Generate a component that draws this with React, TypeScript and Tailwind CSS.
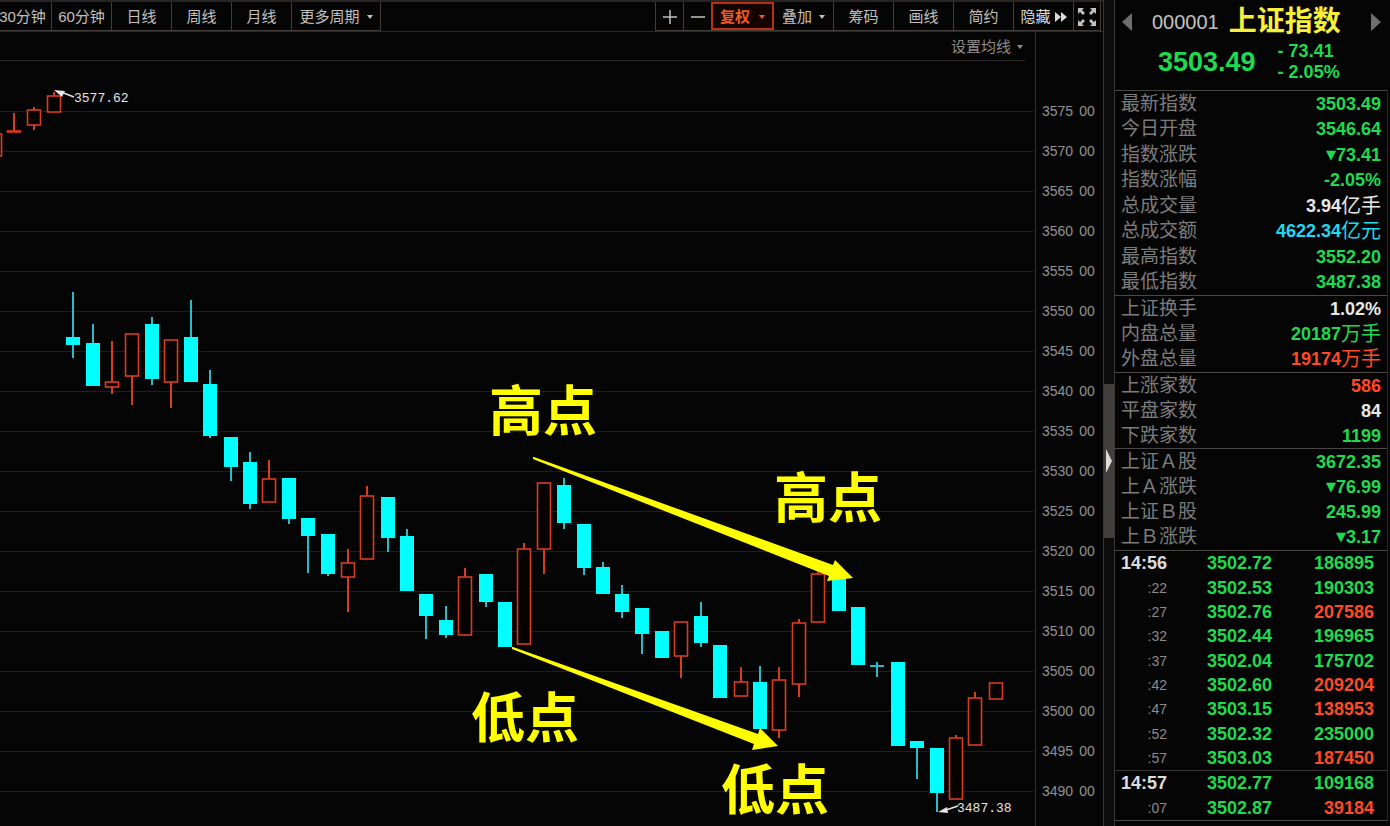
import { Fragment } from 'react';


type Candle = {
  x: number;
  top: number;
  bottom: number;
  high?: number;
  low?: number;
  up?: boolean;
};

const candles: Candle[] = [
  { x: -5, top: 134, bottom: 156, up: true },
  { x: 14, top: 131, bottom: 132, high: 113, up: true },
  { x: 34, top: 110, bottom: 125, high: 107, low: 130, up: true },
  { x: 54, top: 96, bottom: 112, high: 92, up: true },
  { x: 73, top: 337, bottom: 345, high: 292, low: 358 },
  { x: 93, top: 343, bottom: 386, high: 324 },
  { x: 112, top: 382, bottom: 387, high: 341, low: 394, up: true },
  { x: 132, top: 334, bottom: 376, low: 405, up: true },
  { x: 152, top: 324, bottom: 379, high: 317, low: 385 },
  { x: 171, top: 340, bottom: 382, low: 408, up: true },
  { x: 191, top: 337, bottom: 382, high: 300 },
  { x: 210, top: 384, bottom: 436, high: 370, low: 438 },
  { x: 231, top: 437, bottom: 467, low: 481 },
  { x: 250, top: 462, bottom: 504, high: 452, low: 509 },
  { x: 269, top: 479, bottom: 502, high: 460, up: true },
  { x: 289, top: 478, bottom: 519, low: 524 },
  { x: 308, top: 518, bottom: 536, low: 573 },
  { x: 328, top: 534, bottom: 574, low: 576 },
  { x: 348, top: 563, bottom: 577, high: 549, low: 612, up: true },
  { x: 367, top: 496, bottom: 559, high: 486, up: true },
  { x: 388, top: 497, bottom: 538, low: 552 },
  { x: 407, top: 536, bottom: 591, high: 529 },
  { x: 426, top: 594, bottom: 616, low: 639 },
  { x: 446, top: 620, bottom: 635, high: 606, low: 638 },
  { x: 465, top: 577, bottom: 635, high: 568, up: true },
  { x: 486, top: 574, bottom: 602, low: 607 },
  { x: 505, top: 602, bottom: 647 },
  { x: 524, top: 549, bottom: 644, high: 543, up: true },
  { x: 544, top: 483, bottom: 549, low: 574, up: true },
  { x: 564, top: 485, bottom: 523, high: 478, low: 529 },
  { x: 584, top: 524, bottom: 568, low: 575 },
  { x: 603, top: 567, bottom: 594, high: 562 },
  { x: 622, top: 594, bottom: 612, high: 585, low: 618 },
  { x: 642, top: 608, bottom: 634, low: 654 },
  { x: 662, top: 631, bottom: 658 },
  { x: 681, top: 622, bottom: 656, low: 678, up: true },
  { x: 701, top: 616, bottom: 643, high: 602, low: 647 },
  { x: 720, top: 645, bottom: 698 },
  { x: 741, top: 682, bottom: 696, high: 667, up: true },
  { x: 760, top: 682, bottom: 729, high: 666 },
  { x: 779, top: 680, bottom: 730, high: 667, low: 738, up: true },
  { x: 799, top: 623, bottom: 684, high: 619, low: 697, up: true },
  { x: 818, top: 574, bottom: 622, high: 572, up: true },
  { x: 839, top: 578, bottom: 611 },
  { x: 858, top: 607, bottom: 665 },
  { x: 877, top: 665, bottom: 667, high: 662, low: 677 },
  { x: 898, top: 662, bottom: 746 },
  { x: 917, top: 741, bottom: 748, low: 779 },
  { x: 937, top: 748, bottom: 793, low: 812 },
  { x: 956, top: 738, bottom: 799, high: 735, up: true },
  { x: 975, top: 698, bottom: 745, high: 692, up: true },
  { x: 996, top: 683, bottom: 699, up: true },
];

const prices = [
  3575, 3570, 3565, 3560, 3555, 3550, 3545, 3540, 3535, 3530, 3525, 3520, 3515,
  3510, 3505, 3500, 3495, 3490,
];

const green = 'text-[#1fd94f]';
const red = 'text-[#ff4a26]';
const white = 'text-[#e8e8e8]';
const cyan = 'text-[#1fd8ee]';

const sections = [
  {
    height: 'h-[205px]',
    rows: [
      { label: '最新指数', value: '3503.49', color: green },
      { label: '今日开盘', value: '3546.64', color: green },
      { label: '指数涨跌', value: '73.41', color: green, down: true },
      { label: '指数涨幅', value: '-2.05%', color: green },
      { label: '总成交量', value: '3.94', unit: '亿手', color: white },
      { label: '总成交额', value: '4622.34', unit: '亿元', color: cyan },
      { label: '最高指数', value: '3552.20', color: green },
      { label: '最低指数', value: '3487.38', color: green },
    ],
  },
  {
    height: 'h-[77px]',
    rows: [
      { label: '上证换手', value: '1.02%', color: white },
      { label: '内盘总量', value: '20187', unit: '万手', color: green },
      { label: '外盘总量', value: '19174', unit: '万手', color: red },
    ],
  },
  {
    height: 'h-[76px]',
    rows: [
      { label: '上涨家数', value: '586', color: red },
      { label: '平盘家数', value: '84', color: white },
      { label: '下跌家数', value: '1199', color: green },
    ],
  },
  {
    height: 'h-[102px]',
    rows: [
      { label: '上证Ａ股', value: '3672.35', color: green },
      { label: '上Ａ涨跌', value: '76.99', color: green, down: true },
      { label: '上证Ｂ股', value: '245.99', color: green },
      { label: '上Ｂ涨跌', value: '3.17', color: green, down: true },
    ],
  },
];

const ticks = [
  { time: '14:56', price: '3502.72', volume: '186895', color: green },
  { time: ':22', price: '3502.53', volume: '190303', color: green },
  { time: ':27', price: '3502.76', volume: '207586', color: red },
  { time: ':32', price: '3502.44', volume: '196965', color: green },
  { time: ':37', price: '3502.04', volume: '175702', color: green },
  { time: ':42', price: '3502.60', volume: '209204', color: red },
  { time: ':47', price: '3503.15', volume: '138953', color: red },
  { time: ':52', price: '3502.32', volume: '235000', color: green },
  { time: ':57', price: '3503.03', volume: '187450', color: red },
  { time: '14:57', price: '3502.77', volume: '109168', color: green },
  { time: ':07', price: '3502.87', volume: '39184', color: red },
];

const tool = 'flex items-center justify-center border-r border-[#423d3b] pt-[2px] whitespace-nowrap';

function Caret() {
  return (
    <svg width="6" height="4" viewBox="0 0 6 4" fill="currentColor" aria-hidden="true">
      <path d="M0 0h6L3 4z" />
    </svg>
  );
}

function Toolbar() {
  return (
    <header className="flex h-8 justify-between overflow-hidden border-t-2 border-b border-t-[#292525] border-b-[#2c2827] text-[15px] text-[#c4c0bd]">
      <nav className="flex shrink-0 border-b border-[#423d3b]">
        <button className={`${tool} w-[52px] pr-[6px]`}>30分钟</button>
        <button className={`${tool} w-[60px]`}>60分钟</button>
        <button className={`${tool} w-[60px]`}>日线</button>
        <button className={`${tool} w-[60px]`}>周线</button>
        <button className={`${tool} w-[60px]`}>月线</button>
        <button className={`${tool} w-[89px] gap-[7px]`}>
          更多周期 <Caret />
        </button>
      </nav>

      <div className="mr-[2px] flex shrink-0 border-b border-l border-[#423d3b]">
        <button className={`${tool} w-[28px]`} aria-label="放大">
          <svg width="14" height="14" viewBox="0 0 14 14" stroke="currentColor" strokeWidth="1.5">
            <path d="M7 0v14M0 7h14" />
          </svg>
        </button>
        <button className={`${tool} w-[27px] border-r-0`} aria-label="缩小">
          <svg width="14" height="14" viewBox="0 0 14 14" stroke="currentColor" strokeWidth="1.5">
            <path d="M0 7h14" />
          </svg>
        </button>
        <button className="flex w-[63px] items-center justify-center gap-[9px] border-2 border-[#b53210] bg-[#140400] pt-[2px] font-bold text-[#f4591c]">
          复权 <Caret />
        </button>
        <button className={`${tool} w-[60px] gap-[7px]`}>
          叠加 <Caret />
        </button>
        <button className={`${tool} w-[60px]`}>筹码</button>
        <button className={`${tool} w-[60px]`}>画线</button>
        <button className={`${tool} w-[60px]`}>简约</button>
        <button className={`${tool} w-[60px] gap-1 text-[#dedad7]`}>
          隐藏
          <svg width="12" height="10" viewBox="0 0 12 10" fill="currentColor">
            <path d="M0 0l6 5-6 5zM6 0l6 5-6 5z" />
          </svg>
        </button>
        <button className={`${tool} w-[27px]`} aria-label="全屏">
          <svg width="18" height="18" viewBox="0 0 18 18" fill="currentColor">
            <path d="M0 0h6L4 2l3 3-2 2-3-3-2 2zM18 0h-6l2 2-3 3 2 2 3-3 2 2zM0 18h6l-2-2 3-3-2-2-3 3-2-2zM18 18h-6l2-2-3-3 2-2 3 3 2-2z" />
          </svg>
        </button>
      </div>
    </header>
  );
}

function Chart() {
  return (
    <svg
      className="block h-[765px] w-full"
      viewBox="0 61 1035 765"
      preserveAspectRatio="xMaxYMin meet"
    >
      {prices.map((p, i) => (
        <rect key={p} x="0" y={111 + i * 40} width="1034" height="1" fill="#211d1b" />
      ))}

      {candles.map((c) => {
        const color = c.up ? '#d83c20' : '#2fb9c4';
        return (
          <Fragment key={c.x}>
            {c.high && <rect x={c.x - 1} y={c.high} width="2" height={c.top - c.high} fill={color} />}
            {c.low && <rect x={c.x - 1} y={c.bottom} width="2" height={c.low - c.bottom} fill={color} />}
            {c.up ? (
              <rect x={c.x - 6.5} y={c.top} width="13" height={c.bottom - c.top} fill="#080303" stroke={color} strokeWidth="1.6" />
            ) : (
              <rect x={c.x - 7} y={c.top} width="14" height={c.bottom - c.top} fill={c.bottom - c.top < 3 ? color : '#00ffff'} />
            )}
          </Fragment>
        );
      })}

      {/* high / low markers */}
      <g fill="#e6e6e6" fontFamily='"Liberation Mono", monospace' fontSize="13">
        <path d="M54 90l11 1-3 6z" />
        <path d="M61 92l13 5" stroke="#e6e6e6" strokeWidth="1.5" />
        <text x="74" y="102">3577.62</text>
        <path d="M938 812l9-5 1 6z" />
        <path d="M946 810l12-4" stroke="#e6e6e6" strokeWidth="1.5" />
        <text x="957" y="812">3487.38</text>
      </g>

      {/* trend arrows */}
      <g fill="#ffff00">
        <path d="M533 457l1 0L833 565 835 560 853 578 827 581 829 576 533 459z" />
        <path d="M512 647l1 0L758 734 760 728 778 746 752 750 754 744 512 649z" />
      </g>

      <g
        fill="#ffff00"
        fontFamily='"Noto Sans CJK SC", sans-serif'
        fontSize="54"
        fontWeight="700"
      >
        <text x="489" y="431">高点</text>
        <text x="774" y="518">高点</text>
        <text x="471" y="738">低点</text>
        <text x="721" y="810">低点</text>
      </g>
    </svg>
  );
}

function Splitter() {
  return (
    <div className="flex w-[10px] shrink-0 flex-col bg-[#0d0c0c] pt-[384px]">
      <button className="flex h-[154px] items-center justify-center bg-[#413e3e]" aria-label="收起侧栏">
        <svg width="6" height="24" viewBox="0 0 6 24" fill="#dcdcdc">
          <path d="M0 0l6 12-6 12z" />
        </svg>
      </button>
    </div>
  );
}

function QuotePanel() {
  return (
    <aside className="w-[276px] shrink-0 border-l border-[#3b3837] pr-[2px]">
      <div className="h-[90px] pt-1">
        <div className="flex h-9 items-center pr-[7px] pl-[7px]">
          <button aria-label="上一个">
            <svg width="10" height="18" viewBox="0 0 10 18" fill="#6e6e6e">
              <path d="M10 0v18L0 9z" />
            </svg>
          </button>
          <span className="ml-5 text-[20px] text-[#c2c2c2]">000001</span>
          <h1 className="ml-[10px] text-[28px] leading-9 font-bold text-[#f6f03a]">上证指数</h1>
          <button className="ml-auto" aria-label="下一个">
            <svg width="10" height="18" viewBox="0 0 10 18" fill="#6e6e6e">
              <path d="M0 0v18l10-9z" />
            </svg>
          </button>
        </div>
        <div className={`flex items-center gap-5 pt-px pl-[43px] font-bold ${green}`}>
          <span className="text-[27px] leading-[42px]">3503.49</span>
          <div className="pl-[2px] text-[18px] leading-[21px]">
            <p className="flex">
              <span className="w-[11px]">-</span>73.41
            </p>
            <p className="flex">
              <span className="w-[11px]">-</span>2.05%
            </p>
          </div>
        </div>
      </div>

      <div className="border-r border-[#33241f]">
        {sections.map((section) => (
          <dl
            key={section.rows[0].label}
            className={`flex flex-col border-t border-[#4a4745] pr-[6px] pl-[6px] ${section.height}`}
          >
            {section.rows.map((row) => (
              <div key={row.label} className="flex flex-1 items-center justify-between">
                <dt className="text-[19px] leading-6 text-[#7c7c7c]">{row.label}</dt>
                <dd className={`flex items-center text-[18px] leading-6 font-bold ${row.color}`}>
                  {'down' in row && (
                    <span className="font-['DejaVu_Sans'] text-[13px] font-normal">▼</span>
                  )}
                  {row.value}
                  {'unit' in row && <span className="text-[20px] font-normal">{row.unit}</span>}
                </dd>
              </div>
            ))}
          </dl>
        ))}

        <table className="h-[271px] w-full border-collapse border-y border-[#4a4745] text-right text-[18px] leading-6 font-bold">
          <tbody>
            {ticks.map((t) => (
              <tr key={t.time} className={t.time === '14:57' ? 'border-t border-[#3a3736]' : ''}>
                <td
                  className={
                    t.time.startsWith(':')
                      ? 'w-[52px] p-0 text-[14px] font-normal text-[#8c8c8c]'
                      : 'w-[52px] p-0 text-[#dcdcdc]'
                  }
                >
                  {t.time}
                </td>
                <td className={`w-[105px] p-0 ${green}`}>{t.price}</td>
                <td className={`p-0 pr-[13px] ${t.color}`}>{t.volume}</td>
              </tr>
            ))}
          </tbody>
        </table>
      </div>
    </aside>
  );
}

export default function App() {
  return (
    <div className="flex min-h-screen overflow-hidden bg-[#060505] font-['Liberation_Sans','Noto_Sans_CJK_SC',sans-serif]">
      <main className="flex min-w-0 flex-1 flex-col border-r border-[#3b3837]">
        <Toolbar />
        <div className="flex flex-1">
          <section className="min-w-0 flex-1">
            <div className="mr-[10px] flex h-[29px] items-center justify-end border-b border-[#2c2928] pt-[2px]">
              <button className="flex items-center gap-[6px] pr-[2px] text-[15px] text-[#8f8c8a]">
                设置均线 <Caret />
              </button>
            </div>
            <Chart />
          </section>

          <div className="w-[68px] shrink-0 border-l border-[#34302f] pt-[59px] pl-[6px] text-[14px] text-[#929292]">
            {prices.map((p) => (
              <div key={p} className="flex h-10 items-center gap-[6px]">
                <span>{p}</span>
                <span>00</span>
              </div>
            ))}
          </div>
        </div>
      </main>

      <Splitter />
      <QuotePanel />
    </div>
  );
}
